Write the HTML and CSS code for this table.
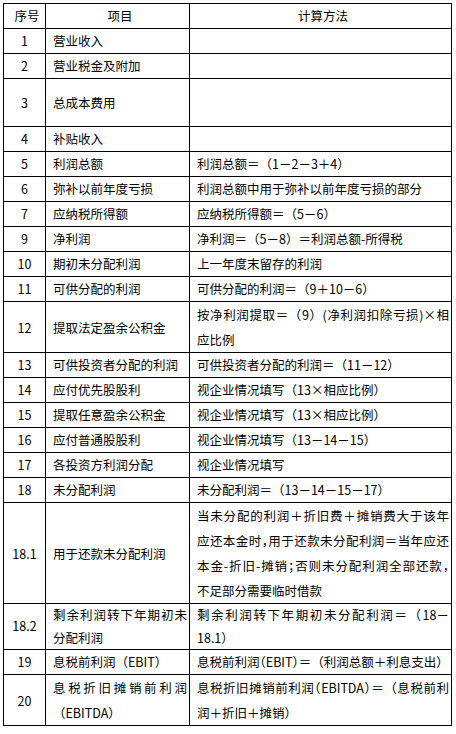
FILE: index.html
```html
<!DOCTYPE html>
<html lang="zh-CN">
<head>
<meta charset="utf-8">
<link rel="stylesheet" href="styles.css">
</head>
<body>
<table class="sheet">
  <colgroup>
    <col class="c-no">
    <col class="c-item">
    <col class="c-method">
  </colgroup>
  <thead>
    <tr class="row">
      <th>序号</th>
      <th>项目</th>
      <th>计算方法</th>
    </tr>
  </thead>
  <tbody>
    <tr class="row"><td class="no">1</td><td>营业收入</td><td></td></tr>
    <tr class="row"><td class="no">2</td><td>营业税金及附加</td><td></td></tr>
    <tr class="row tall"><td class="no">3</td><td>总成本费用</td><td></td></tr>
    <tr class="row"><td class="no">4</td><td>补贴收入</td><td></td></tr>
    <tr class="row"><td class="no">5</td><td>利润总额</td><td>利润总额＝（1－2－3＋4）</td></tr>
    <tr class="row"><td class="no">6</td><td>弥补以前年度亏损</td><td>利润总额中用于弥补以前年度亏损的部分</td></tr>
    <tr class="row"><td class="no">7</td><td>应纳税所得额</td><td>应纳税所得额＝（5－6）</td></tr>
    <tr class="row"><td class="no">9</td><td>净利润</td><td>净利润＝（5－8）＝利润总额-所得税</td></tr>
    <tr class="row"><td class="no">10</td><td>期初未分配利润</td><td>上一年度末留存的利润</td></tr>
    <tr class="row"><td class="no">11</td><td>可供分配的利润</td><td>可供分配的利润＝（9＋10－6）</td></tr>
    <tr class="row multi">
      <td class="no">12</td>
      <td>提取法定盈余公积金</td>
      <td><span class="line fill">按净利润提取＝（9）(净利润扣除亏损)×相</span><span class="line">应比例</span></td>
    </tr>
    <tr class="row"><td class="no">13</td><td>可供投资者分配的利润</td><td>可供投资者分配的利润＝（11－12）</td></tr>
    <tr class="row"><td class="no">14</td><td>应付优先股股利</td><td>视企业情况填写（13×相应比例）</td></tr>
    <tr class="row"><td class="no">15</td><td>提取任意盈余公积金</td><td>视企业情况填写（13×相应比例）</td></tr>
    <tr class="row"><td class="no">16</td><td>应付普通股股利</td><td>视企业情况填写（13－14－15）</td></tr>
    <tr class="row"><td class="no">17</td><td>各投资方利润分配</td><td>视企业情况填写</td></tr>
    <tr class="row"><td class="no">18</td><td>未分配利润</td><td>未分配利润＝（13－14－15－17）</td></tr>
    <tr class="row multi">
      <td class="no">18.1</td>
      <td>用于还款未分配利润</td>
      <td><span class="line fill">当未分配的利润＋折旧费＋摊销费大于该年</span><span class="line fill">应还本金时<span class="half">，</span>用于还款未分配利润＝当年应还</span><span class="line fill">本金-折旧-摊销<span class="half">；</span>否则未分配利润全部还款<span class="half">，</span></span><span class="line">不足部分需要临时借款</span></td>
    </tr>
    <tr class="row multi short">
      <td class="no">18.2</td>
      <td><span class="line fill">剩余利润转下年期初未</span><span class="line">分配利润</span></td>
      <td><span class="line fill">剩余利润转下年期初未分配利润＝（18－</span><span class="line">18.1）</span></td>
    </tr>
    <tr class="row"><td class="no">19</td><td>息税前利润（EBIT）</td><td class="single">息税前利润<span class="half">（</span>EBIT<span class="half">）</span>＝（利润总额＋利息支出）</td></tr>
    <tr class="row multi">
      <td class="no">20</td>
      <td><span class="line fill">息税折旧摊销前利润</span><span class="line">（EBITDA）</span></td>
      <td><span class="line fill">息税折旧摊销前利润<span class="half">（</span>EBITDA<span class="half">）</span>＝（息税前利</span><span class="line">润＋折旧＋摊销）</span></td>
    </tr>
  </tbody>
</table>
</body>
</html>
```
FILE: styles.css
```css
html, body {
  background: #ffffff;
}
body {
  margin: 3px;
  font-family: "Noto Sans CJK SC", "Noto Sans", sans-serif;
  font-size: 12.5px;
  color: #000000;
}
.sheet {
  border-collapse: collapse;
  table-layout: fixed;
  width: 448px;
}
.c-no { width: 42px; }
.c-item { width: 144px; }
.c-method { width: 262px; }
.sheet th,
.sheet td {
  border: 1px solid #000000;
  padding: 0 2px 0 7px;
  line-height: 24px;
  height: 24px;
  vertical-align: middle;
  text-align: left;
  font-weight: normal;
}
.sheet th {
  text-align: center;
}
.sheet td.no {
  text-align: center;
  padding: 0 2px;
}
.sheet td.single {
  white-space: nowrap;
}
.row.tall td {
  height: 47px;
}
.row.multi td {
  line-height: 25px;
}
.row.multi.short td {
  line-height: 22.5px;
}
.line {
  display: block;
  white-space: nowrap;
}
.line.fill {
  text-align: justify;
  text-align-last: justify;
}
.half {
  font-feature-settings: "halt" 1;
}
```
